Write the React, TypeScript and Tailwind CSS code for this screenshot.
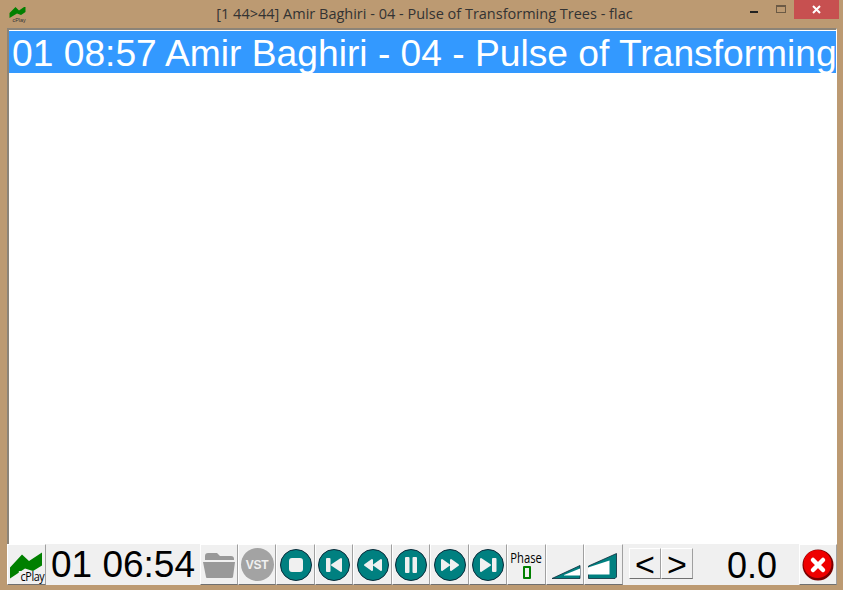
import type { ReactNode } from 'react'

function Btn({ w, children }: { w: string; children: ReactNode }) {
    return (
        <div className={`${w} h-full shrink-0 flex items-center justify-center bg-[#f0f0f0] border border-t-white border-l-white border-r-[#a0a0a0] border-b-[#707070]`}>
            {children}
        </div>
    )
}

function Round({ children }: { children: ReactNode }) {
    return (
        <svg width="32" height="32" viewBox="0 0 32 32">
            <circle cx="16" cy="16" r="15.5" fill="#008080" stroke="#0a2a3a" />
            <g fill="#f0f0f0" stroke="#f0f0f0" strokeWidth="2" strokeLinejoin="round">{children}</g>
        </svg>
    )
}

export default function App() {
    return (
        <div className="w-[843px] h-[590px] bg-[#bc9a72] flex flex-col overflow-hidden font-['Liberation_Sans',sans-serif]">
            {/*Title bar*/}
            <div className="h-[28px] shrink-0 flex items-start relative">
                <div className="absolute left-[9px] top-[7px] w-[17px] h-[15px]">
                    <svg width="17" height="11" viewBox="0 0 32 22">
                        <path d="M0 12 L12 0 L19 7 L32 -2 V10 L23 16 L15 13 L0 22 Z" fill="#008000" />
                    </svg>
                    <span className="absolute right-0 top-[10px] text-[6px] leading-[6px] text-[#333] scale-x-90 origin-right">cPlay</span>
                </div>
                <div className="flex-1 text-center text-[14.5px] leading-[28px] text-[#333] pl-[6px] font-['Open_Sans',sans-serif]">[1 44&gt;44] Amir Baghiri - 04 - Pulse of Transforming Trees - flac</div>
                <div className="absolute left-[750px] top-[11px] w-[8px] h-[2px] bg-[#222]" />
                <div className="absolute left-[776px] top-[5px] w-[10px] h-[8px] border border-t-2 border-[#6b5a45]" />
                <div className="absolute left-[794px] top-0 w-[45px] h-[19px] bg-[#c75050] flex items-center justify-center">
                    <svg width="9" height="9" viewBox="0 0 9 9"><path d="M1 1 L8 8 M8 1 L1 8" stroke="#fff" strokeWidth="2" /></svg>
                </div>
            </div>

            {/*Playlist*/}
            <div className="mx-[7px] w-[830px] h-[516px] shrink-0 bg-white border-t-2 border-l-2 border-r border-t-[#8c8478] border-l-[#8c8478] border-r-white overflow-hidden">
                <div className="mt-[1px] h-[42px] bg-[#3399ff] text-white text-[37.2px] leading-[44px] pl-[3px] whitespace-nowrap">01 08:57 Amir Baghiri - 04 - Pulse of Transforming</div>
            </div>

            {/*Toolbar*/}
            <div className="mx-[7px] w-[830px] h-[41px] shrink-0 flex items-stretch bg-[#f0f0f0]">
                <Btn w="w-[39px]">
                    <div className="relative w-[35px] h-[34px]">
                        <svg className="absolute left-[1px] top-[2px]" width="33" height="30" viewBox="0 0 33 30">
                            <path d="M0 17.5 L12 4.5 L19 11 L32 2.5 V15.5 L23 21 L15 18.5 L0 28.5 Z" fill="#008000" />
                        </svg>
                        <span className="absolute right-0 bottom-[-1px] bg-[#f0f0f0] pl-[2px] text-[12px] leading-[12px] text-black font-['Open_Sans',sans-serif] tracking-[-0.5px] scale-x-90 origin-right">cPlay</span>
                    </div>
                </Btn>
                <div className="w-[154px] shrink-0 text-[37px] leading-[42px] text-black pl-[5px] whitespace-nowrap">01 06:54</div>
                <Btn w="w-[38px]">
                    <svg width="34" height="28" viewBox="0 0 34 28">
                        <path d="M3 5 Q3 2 6 2 H15 L18 5 H29 Q32 5 32 8 V9 H3 Z" fill="#999" />
                        <path d="M1 11 H33 L31 26 Q31 27 29 27 H5 Q4 27 4 26 Z" fill="#999" />
                    </svg>
                </Btn>
                <Btn w="w-[38px]">
                    <div className="w-[33px] h-[33px] rounded-full bg-[#a3a3a3] flex items-center justify-center text-[#f0f0f0] text-[12px] font-bold tracking-[-0.3px]">VST</div>
                </Btn>
                <Btn w="w-[39px]"><Round><rect x="10" y="10" width="12" height="12" rx="2" /></Round></Btn>
                <Btn w="w-[38px]"><Round><rect x="9" y="10" width="2.5" height="12" /><path d="M23 10 V22 L14 16 Z" /></Round></Btn>
                <Btn w="w-[39px]"><Round><path d="M15 11 V21 L8 16 Z M24 11 V21 L17 16 Z" /></Round></Btn>
                <Btn w="w-[38px]"><Round><rect x="11" y="9" width="2.5" height="14" /><rect x="18.5" y="9" width="2.5" height="14" /></Round></Btn>
                <Btn w="w-[39px]"><Round><path d="M8 11 V21 L15 16 Z M17 11 V21 L24 16 Z" /></Round></Btn>
                <Btn w="w-[38px]"><Round><path d="M9 10 V22 L18 16 Z" /><rect x="21" y="10" width="2.5" height="12" /></Round></Btn>
                <Btn w="w-[39px]">
                    <div className="flex flex-col items-center">
                        <span className="text-[15px] leading-[13px] font-medium text-black font-['Open_Sans',sans-serif] scale-x-75 whitespace-nowrap">Phase</span>
                        <span className="w-[8px] h-[13px] mt-[2px] border-2 border-[#008000] rounded-[1px]" />
                    </div>
                </Btn>
                <Btn w="w-[38px]">
                    <svg width="32" height="34" viewBox="0 0 32 34">
                        <path d="M3 30.5 L31 17.5 V30.5 Z" fill="#008080" stroke="#0a2a3a" strokeWidth="0.8" />
                        <path d="M15 27 L31 20.5 V27.5 H15 Z" fill="#fff" />
                    </svg>
                </Btn>
                <Btn w="w-[39px]">
                    <svg width="32" height="34" viewBox="0 0 32 34">
                        <path d="M0.5 18 L28.5 5.5 V29 L27 30.5 H0.5 Z" fill="#008080" stroke="#0a2a3a" strokeWidth="0.8" />
                        <path d="M0 19.5 L21.5 12.5 V26.5 H0 Z" fill="#fff" />
                    </svg>
                </Btn>
                <div className="w-[6px] shrink-0" />
                <div className="flex h-[31px] mt-[4px] shrink-0">
                    <Btn w="w-[32px]"><span className="text-[34px] leading-[28px] text-black">&lt;</span></Btn>
                    <Btn w="w-[32px]"><span className="text-[34px] leading-[28px] text-black">&gt;</span></Btn>
                </div>
                <div className="w-[106px] shrink-0 text-[36px] leading-[44px] text-black text-right pr-[22px] bg-[#f0f0f0]">0.0</div>
                <div className="flex-1 h-full flex items-center justify-center bg-[#f0f0f0] border border-t-white border-l-white border-r-[#a0a0a0] border-b-[#707070]">
                    <svg width="32" height="32" viewBox="0 0 32 32">
                        <circle cx="16" cy="16" r="15.5" fill="#7a0000" />
                        <circle cx="15.5" cy="15" r="14" fill="#ee0000" />
                        <path d="M11 11 L21 21 M21 11 L11 21" stroke="#fff" strokeWidth="4.5" strokeLinecap="round" />
                    </svg>
                </div>
            </div>
        </div>
    )
}
